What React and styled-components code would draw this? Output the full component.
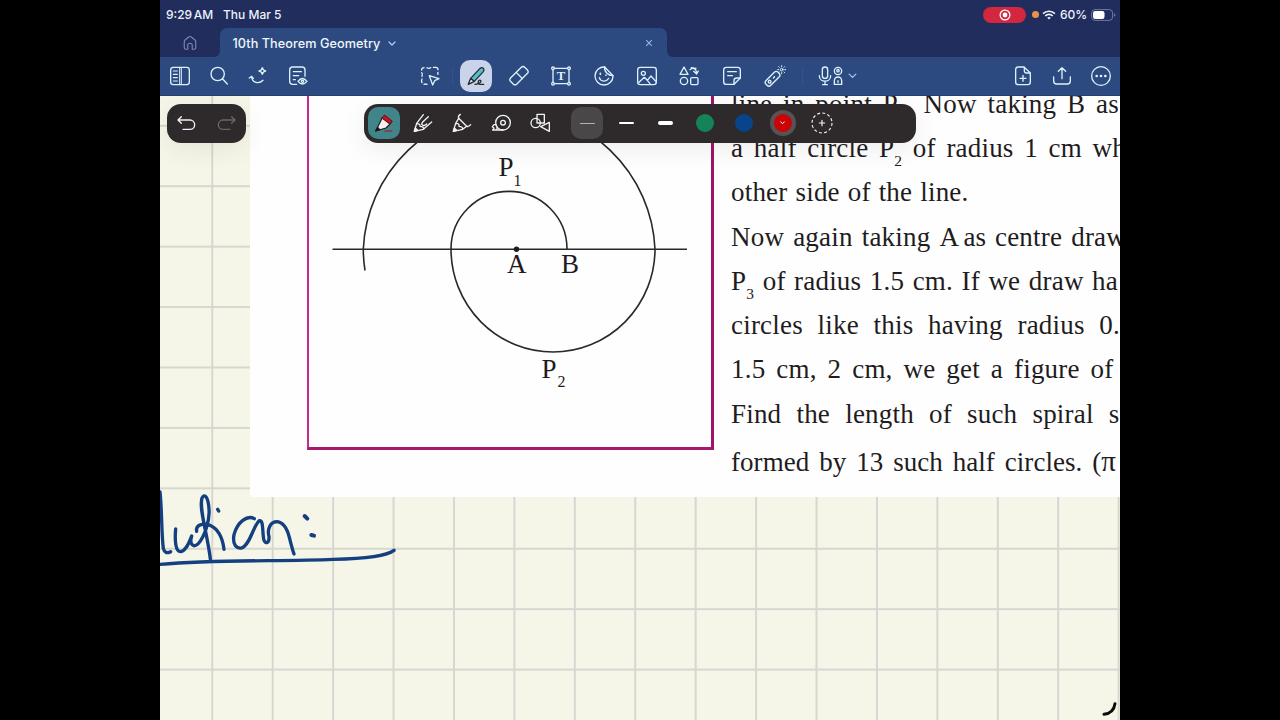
import React from 'react';
import styled, { createGlobalStyle } from 'styled-components';

const GlobalStyle = createGlobalStyle`
    *{
        box-sizing: border-box;
    }
    body{
        margin: 0;
        background: #000000;
    }
`
const Screen = styled.div`
    width: 1280px;
    height: 720px;
    display: flex;
    justify-content: center;
    overflow: hidden;
    background: #000000;
`
const Tablet = styled.div`
    width: 960px;
    height: 720px;
    display: flex;
    flex-direction: column;
    font-family: Inter, "Liberation Sans", sans-serif;
    background: #212d5d;
`
const StatusBar = styled.div`
    height: 28px;
    display: flex;
    align-items: center;
    padding: 1px 4px 0 6px;
    color: #eef2fb;
    font-size: 12px;
    font-weight: 500;
    white-space: nowrap;
`
const Clock = styled.span`
    width: 57px;
    word-spacing: -1.6px;
`
const Today = styled.span`
    flex: 1;
`
const RecordPill = styled.div`
    width: 43px;
    height: 16px;
    display: flex;
    align-items: center;
    justify-content: center;
    border-radius: 8px;
    background: #d3263f;
`
const MicDot = styled.div`
    width: 7px;
    height: 7px;
    margin: 0 3px 0 6px;
    border-radius: 50%;
    background: #e8914a;
`
const Percent = styled.span`
    width: 28px;
    margin: 0 3px 0 4px;
    font-size: 12px;
`
const TabRow = styled.div`
    height: 29px;
    display: flex;
    background: #2c4a80;
`
const HomeTab = styled.div`
    width: 60px;
    display: flex;
    align-items: center;
    justify-content: center;
    border-bottom-right-radius: 6px;
    background: #212d5d;
`
const TabSlot = styled.div`
    width: 446.5px;
    background: linear-gradient(#212d5d 50%, #2c4a80 50%);
`
const Tab = styled.div`
    height: 100%;
    display: flex;
    align-items: center;
    padding: 1px 14px 0 12.5px;
    border-radius: 7px 7px 0 0;
    background: #2c4a80;
`
const TabTitle = styled.span`
    color: #eef6fd;
    font-size: 12.7px;
    font-weight: 500;
    letter-spacing: 0.05px;
    white-space: nowrap;
    margin-right: 8px;
`
const Spacer = styled.div`
    flex: 1;
`
const TabRest = styled.div`
    flex: 1;
    border-bottom-left-radius: 6px;
    background: #212d5d;
`
const Toolbar = styled.div`
    height: 39px;
    flex-shrink: 0;
    display: flex;
    align-items: center;
    background: #2c4a80;
    border-bottom: 1px solid #25406f;
    color: #dcf1fb;
`
const Group = styled.div`
    display: flex;
    align-items: center;
    margin-left: ${p => p.$gap || 0}px;
`
const Cell = styled.div`
    width: ${p => p.$w}px;
    height: 39px;
    display: flex;
    align-items: center;
    justify-content: center;
    flex-shrink: 0;
`
const Divider = styled.div`
    width: 1px;
    height: 18px;
    margin: 0 1.1px;
    background: #35528a;
`
const Tile = styled.div`
    width: 32px;
    height: 32px;
    display: flex;
    align-items: center;
    justify-content: center;
    border-radius: 10px;
    background: ${p => p.$bg};
`
const Canvas = styled.div`
    position: relative;
    flex: 1;
    overflow: hidden;
    background-color: #f5f5e8;
    background-image:
        linear-gradient(90deg, #d7d7d1 1.7px, transparent 1.7px),
        linear-gradient(#d7d7d1 1.7px, transparent 1.7px);
    background-size: 60.43px 60.43px;
    background-position: 51.3px 28.8px;
`
const Paper = styled.div`
    height: 401px;
    display: flex;
    margin-left: 90px;
    overflow: hidden;
    background: #fefefe;
`
const Figure = styled.div`
    width: 407px;
    height: 354px;
    margin-left: 57px;
    flex-shrink: 0;
    border-left: 2px solid #c62a8e;
    border-right: 3px solid #9e1468;
    border-bottom: 3px solid #a9176f;

    svg{
        display: block;
    }
`
const Problem = styled.div`
    margin: -14.4px 0 0 17px;
    flex-shrink: 0;
    font-family: "Liberation Serif", serif;
    font-size: 27px;
    color: #1f1c1d;
`
const Line = styled.div`
    width: ${p => p.$w}px;
    height: ${p => p.$h || 44.3}px;
    line-height: 44px;
    letter-spacing: ${p => p.$spacing ?? 0.2}px;
    white-space: nowrap;
    text-align: justify;
    text-align-last: justify;

    sub{
        font-size: 15.5px;
        line-height: 0;
        vertical-align: -9px;
    }
`
const Tight = styled.span`
    word-spacing: -3px;
    letter-spacing: 0;
`
const Pi = styled.span`
    font-size: 29px;
    line-height: 0;
`
const Floating = styled.div`
    position: absolute;
    top: 7.6px;
    left: ${p => p.$left}px;
    width: ${p => p.$w}px;
    height: 39.2px;
    display: flex;
    align-items: center;
    border-radius: 14px;
    background: #2e2a2b;
    color: #f3f1f1;
    box-shadow: 0 6px 26px rgba(0, 0, 0, 0.07);
`
const Stroke = styled.div`
    width: 15px;
    height: ${p => p.$h}px;
    border-radius: 2px;
    background: ${p => p.$color || "#ffffff"};
`
const Swatch = styled.div`
    width: 18px;
    height: 18px;
    display: flex;
    align-items: center;
    justify-content: center;
    border-radius: 50%;
    background: ${p => p.$color};
    box-shadow: 0 0 0 ${p => p.$active ? 4 : 0}px #575253;
`
const Ink = styled.svg`
    position: absolute;
    left: 0;
    top: 374px;
`
const PageCurl = styled.svg`
    position: absolute;
    left: 940px;
    top: 604px;
`

const Icon = ({size = 24, stroke = 4, color = "currentColor", children}) => (
    <svg width={size} height={size} viewBox="0 0 72 72" fill="none" stroke={color}
        strokeWidth={stroke} strokeLinecap="round" strokeLinejoin="round">
        {children}
    </svg>
)

const Chevron = ({w = 8, color = "#b9cdea", stroke = 1.2}) => (
    <svg width={w} height={w / 2 + 1} viewBox="0 0 8 5" fill="none" stroke={color} strokeWidth={stroke} strokeLinecap="round" strokeLinejoin="round">
        <path d="M1 1l3 3 3-3"/>
    </svg>
)

const leftTools = [
    <Icon key="sidebar">
        <rect x="8" y="10" width="56" height="52" rx="8"/>
        <path d="M35 10v52M40 10v52" strokeWidth="3"/>
        <path d="M16 21h12M16 31h12M16 41h12M16 51h12" strokeWidth="3.5"/>
    </Icon>,
    <Icon key="search">
        <circle cx="32" cy="30" r="20"/>
        <path d="M47 45l14 15"/>
    </Icon>,
    <Icon key="magic">
        <path d="M10 42l7-5 5 6M17 39c2 18 22 22 34 10"/>
        <path d="M49 11q2 9 10 10q-8 1-10 10q-2-9-10-10q8-1 10-10z"/>
    </Icon>,
    <Icon key="review">
        <path d="M32 61H20a9 9 0 0 1-9-9V18a9 9 0 0 1 9-9h28a9 9 0 0 1 9 9v19"/>
        <path d="M22 23h24M22 35h16M22 47h6"/>
        <path d="M36 52q13-17 27 0q-14 16-27 0z"/>
        <circle cx="49.500" cy="52" r="3.500"/>
    </Icon>,
]

const mainTools = [
    <Icon key="eraser">
        <g transform="rotate(-45 36 35)">
            <rect x="6" y="22" width="60" height="26" rx="8"/>
            <path d="M37 22v26"/>
        </g>
    </Icon>,
    <Icon key="text">
        <path d="M17 13h38M17 59h38M12 18v36M60 18v36"/>
        <circle cx="12" cy="13" r="4"/>
        <circle cx="60" cy="13" r="4"/>
        <circle cx="12" cy="59" r="4"/>
        <circle cx="60" cy="59" r="4"/>
        <text x="36" y="49" textAnchor="middle" fontFamily="Liberation Serif, serif" fontWeight="bold" fontSize="38" fill="currentColor" stroke="none">T</text>
    </Icon>,
    <Icon key="sticker">
        <path d="M38 9A27 27 0 1 0 63 35"/>
        <path d="M38 9L63 35C50 36 36 24 38 9z"/>
        <path d="M22 41c4 13 20 14 28 2"/>
        <path d="M25 28v3M42 33v1" strokeWidth="5"/>
    </Icon>,
    <Icon key="image">
        <rect x="8" y="10" width="56" height="52" rx="8"/>
        <circle cx="25" cy="28" r="6"/>
        <path d="M12 55l16-15 9 9 11-13 15 17M37 49l8 10"/>
    </Icon>,
    <Icon key="shapes">
        <path d="M21 9l12 22H9z"/>
        <circle cx="21" cy="51" r="11"/>
        <rect x="41" y="41" width="22" height="21" rx="4"/>
        <path d="M39 17c7-7 19-6 20 12M50 22l9 8 5-9M43 11l14 2"/>
    </Icon>,
    <Icon key="note">
        <path d="M61 42V18a8 8 0 0 0-8-8H19a8 8 0 0 0-8 8v35a8 8 0 0 0 8 8h23z"/>
        <path d="M42 61V50a8 8 0 0 1 8-8h11M23 23h26M23 35h14"/>
    </Icon>,
    <Icon key="laser">
        <g transform="rotate(-45 29 44)">
            <rect x="3" y="34" width="51" height="20" rx="8"/>
            <circle cx="16" cy="44" r="4"/>
            <path d="M32 44h5"/>
        </g>
        <circle cx="56" cy="17" r="4" strokeWidth="3"/>
        <path d="M56 5v3M56 26v3M44 17h3M65 17h3M47 8l2 2M63 24l2 2M65 8l-2 2M49 24l-2 2" strokeWidth="3"/>
    </Icon>,
]

const pens = [
    <Icon key="pencil">
        <path d="M37 11L17 37l-7 24 27-6 25-22"/>
        <path d="M17 38q11 0 10 8q11 0 11 8"/>
        <path d="M52 17L35 33q-6 8 1 10q5 2 11-4"/>
        <path d="M10 61l3-10 7 7z" fill="currentColor"/>
    </Icon>,
    <Icon key="brush">
        <path d="M31 10q-8 5-5 12l24 24q6 2 12-5"/>
        <path d="M26 22L17 37l-7 24 28-6 12-9M17 37q12 0 10 9q11 0 11 9"/>
        <path d="M10 61l3-10 7 7z" fill="currentColor"/>
    </Icon>,
    <Icon key="tape">
        <circle cx="42" cy="35" r="22"/>
        <circle cx="42" cy="35" r="7"/>
        <path d="M42 57H11l4-5-5-5 5-6h6M24 57v-8"/>
    </Icon>,
    <Icon key="geometry">
        <circle cx="23" cy="36" r="14"/>
        <path d="M27 23V10h22v26H27zM64 34v27L38 47z"/>
    </Icon>,
]

const SpiralFigure = () => (
    <svg width="402" height="351" viewBox="309 96 402 351" fill="none" stroke="#2b2829" strokeWidth="1.6">
        <path d="M332.500 249.200H687"/>
        <path d="M567 249A58 57.700 0 0 0 451 249A102 103 0 0 0 655 249A146 146 0 0 0 363.300 249Q363.300 260 365 270.500"/>
        <circle cx="516.500" cy="249.200" r="2.700" fill="#1f1c1d" stroke="none"/>
        <g fill="#1f1c1d" stroke="none" fontFamily="Liberation Serif, serif" fontSize="27">
            <text x="498.500" y="176">P</text>
            <text x="513.500" y="185.500" fontSize="16">1</text>
            <text x="507" y="273">A</text>
            <text x="561" y="273">B</text>
            <text x="541.500" y="377.500">P</text>
            <text x="557.500" y="387" fontSize="16">2</text>
        </g>
    </svg>
)

const Header = () => (
    <>
        <StatusBar>
            <Clock>9:29 AM</Clock>
            <Today>Thu Mar 5</Today>
            <RecordPill>
                <svg width="12" height="12" viewBox="0 0 12 12">
                    <circle cx="6" cy="6" r="4.900" fill="none" stroke="#fff" strokeWidth="1.200"/>
                    <circle cx="6" cy="6" r="2.400" fill="#fff"/>
                </svg>
            </RecordPill>
            <MicDot/>
            <svg width="14" height="10" viewBox="0 0 14 10" fill="none" stroke="#f4f6fc" strokeWidth="1.700">
                <path d="M1.100 3.700a8.300 8.300 0 0 1 11.800 0M3.300 6a5.200 5.200 0 0 1 7.400 0"/>
                <path d="M7 9.600L5.200 7.800a2.600 2.600 0 0 1 3.600 0z" fill="#f4f6fc" stroke="none"/>
            </svg>
            <Percent>60%</Percent>
            <svg width="25" height="12" viewBox="0 0 25 12">
                <rect x="0.600" y="0.600" width="21" height="10.800" rx="3.400" fill="none" stroke="#7079a0"/>
                <rect x="2" y="2" width="11.500" height="8" rx="2.200" fill="#fff"/>
                <path d="M23 4.200v3.600q1.400-.6 1.400-1.800t-1.400-1.800z" fill="#7079a0"/>
            </svg>
        </StatusBar>
        <TabRow>
            <HomeTab>
                <Icon size={18} stroke={4.5} color="#7b86b4">
                    <path d="M13 31q0-4 3-7l15-12q5-4 10 0l15 12q3 3 3 7v24q0 6-6 6h-8V45q0-8-9-8t-9 8v16h-8q-6 0-6-6z"/>
                </Icon>
            </HomeTab>
            <TabSlot>
                <Tab>
                    <TabTitle>10th Theorem Geometry</TabTitle>
                    <Chevron/>
                    <Spacer/>
                    <svg width="8" height="8" viewBox="0 0 8 8" stroke="#9fb4d8" strokeWidth="1.100">
                        <path d="M1.200 1.200l5.600 5.600M6.800 1.200L1.200 6.800"/>
                    </svg>
                </Tab>
            </TabSlot>
            <TabRest/>
        </TabRow>
    </>
)

const Tools = () => (
    <Toolbar>
        <Group>
            {leftTools.map(icon => <Cell key={icon.key} $w={39.3}>{icon}</Cell>)}
        </Group>
        <Group $gap={91.5}>
            <Cell $w={42.7}>
                <Icon>
                    <path d="M11 18q0-7 7-7M27 11q5 4 11 0M46 10h7q7 0 7 7M60 25q-2 3 0 6M11 26q4 5 1 11M12 45q-3 6 0 11M18 61q5-2 9 0"/>
                    <path d="M34 35l29 9-13 6-6 13z"/>
                </Icon>
            </Cell>
            <Divider/>
            <Cell $w={42.7}>
                <Tile $bg="#c9d3e9">
                    <Icon>
                        <path d="M13 61l7-18 11 9z" fill="#dfe8f2" stroke="#23272f"/>
                        <path d="M20 43L48 13q6-4 10 0t0 10L31 52z" fill="#5bbcc3" stroke="#23303c"/>
                        <path d="M33 61q17-2 18-10q-4-6-8 1q-2 9 6 9h10" stroke="#23272f"/>
                    </Icon>
                </Tile>
            </Cell>
            {mainTools.map(icon => <Cell key={icon.key} $w={42.7}>{icon}</Cell>)}
        </Group>
        <Group $gap={5}>
            <Divider/>
            <Group $gap={14}>
                <svg width="26" height="24" viewBox="0 0 78 72" fill="none" stroke="currentColor" strokeWidth="4" strokeLinecap="round">
                    <rect x="13" y="9" width="16" height="34" rx="8"/>
                    <path d="M4 35c0 22 34 22 34 0M21 52v10M14 62h14"/>
                    <circle cx="60" cy="21" r="11"/>
                    <circle cx="60" cy="20" r="3.500"/>
                    <path d="M49 61V50a11 11 0 0 1 22 0v11zM60 50v5"/>
                </svg>
            </Group>
            <Group $gap={3.5}>
                <Chevron w={9} color="#a9c3e6"/>
            </Group>
        </Group>
        <Spacer/>
        <Group>
            <Cell $w={39}>
                <Icon>
                    <path d="M39 9H22a8 8 0 0 0-8 8v37a8 8 0 0 0 8 8h28a8 8 0 0 0 8-8V27z"/>
                    <path d="M40 10v10a7 7 0 0 0 7 7h10M36 34v18M27 43h18"/>
                </Icon>
            </Cell>
            <Cell $w={39}>
                <Icon>
                    <path d="M11 39v12a9 9 0 0 0 9 9h32a9 9 0 0 0 9-9V39M36 44V12M25 22l11-11 11 11"/>
                </Icon>
            </Cell>
            <Cell $w={39}>
                <Icon>
                    <circle cx="36" cy="36" r="28"/>
                    <path d="M23 36h.1M36 36h.1M49 36h.1" strokeWidth="8"/>
                </Icon>
            </Cell>
        </Group>
    </Toolbar>
)

const PenPalette = () => (
    <Floating $left={204.4} $w={551.4}>
        <Cell $w={39.1}>
            <Tile $bg="#41858a">
                <Icon stroke={3.5}>
                    <path d="M31 20L11 60l31-9 13-13z" fill="#f6eef0" stroke="#1d1718"/>
                    <path d="M30 20l8-8 23 19-6 8z" fill="#c4151c" stroke="#5c1216" strokeWidth="3"/>
                    <path d="M11 60l6-11 6 7z" fill="#1d1718" stroke="#1d1718"/>
                    <path d="M38 60h22" stroke="#a3141d"/>
                </Icon>
            </Tile>
        </Cell>
        {pens.map(icon => <Cell key={icon.key} $w={39.1}>{icon}</Cell>)}
        <Group $gap={8}>
            <Cell $w={39.1}>
                <Tile $bg="#4a4749"><Stroke $h={1} $color="#b5b3b4"/></Tile>
            </Cell>
            <Cell $w={39.1}><Stroke $h={2}/></Cell>
            <Cell $w={39.1}><Stroke $h={4}/></Cell>
            <Cell $w={39.1}><Swatch $color="#14835a"/></Cell>
            <Cell $w={39.1}><Swatch $color="#084489"/></Cell>
            <Cell $w={39.1}>
                <Swatch $color="#cb0307" $active><Chevron w={5} color="#ffffff" stroke={1.6}/></Swatch>
            </Cell>
            <Cell $w={39.1}>
                <Icon stroke={3.5}>
                    <circle cx="36" cy="36" r="30" strokeDasharray="9 6.700" strokeLinecap="butt"/>
                    <path d="M36 28v16M28 36h16"/>
                </Icon>
            </Cell>
        </Group>
    </Floating>
)

export default function App() {
    return(
        <Screen>
            <GlobalStyle/>
            <Tablet>
                <Header/>
                <Tools/>
                <Canvas>
                    <Paper>
                        <Figure><SpiralFigure/></Figure>
                        <Problem>
                            <Line $w={388}>line in point P<sub>1</sub>. Now taking B as</Line>
                            <Line $w={395}>a half circle P<sub>2</sub> of radius 1 cm wh</Line>
                            <Line $w={237.5}>other side of the line.</Line>
                            <Line $w={395}>Now again taking <Tight>A as</Tight> centre draw</Line>
                            <Line $w={387}>P<sub>3</sub> of radius 1.5 cm. If we draw ha</Line>
                            <Line $w={389}>circles like this having radius 0.</Line>
                            <Line $w={382.5}>1.5 cm, 2 cm, we get a figure of</Line>
                            <Line $w={388.5} $h={48}>Find the length of such spiral s</Line>
                            <Line $w={385} $spacing={0.05}>formed by 13 such half circles. (<Pi>π</Pi></Line>
                        </Problem>
                    </Paper>
                    <Ink width="260" height="120" viewBox="0 0 780 360" fill="none" stroke="#143f80" strokeWidth="10" strokeLinecap="round" strokeLinejoin="round">
                        <path d="M0 66C6 120 4 190 10 236Q15 254 32 245"/>
                        <path d="M47 177C44 210 46 247 63 245C80 240 88 215 95 198C88 222 98 234 114 222C134 200 150 150 147 118C145 82 134 68 126 84C116 115 142 190 151 267"/>
                        <path d="M110 184C106 164 130 158 150 166C176 178 188 205 192 238"/>
                        <path d="M173 118l3 5"/>
                        <path d="M283 146C262 134 232 156 222 194C217 222 228 236 245 234C270 226 280 166 298 152C312 150 306 190 312 211C318 224 328 218 327 200C321 178 330 157 349 155C372 156 382 178 388 202C393 222 397 238 402 252"/>
                        <path d="M434 138l8 8M454 195l8 2" strokeWidth="12"/>
                        <path d="M0 283C180 268 360 275 520 268C610 266 680 258 702 241"/>
                    </Ink>
                    <PageCurl width="20" height="20" viewBox="0 0 60 60" fill="none" stroke="#0c0c0c" strokeWidth="9" strokeLinecap="round">
                        <path d="M45 11Q41 40 12 43"/>
                    </PageCurl>
                    <Floating $left={7} $w={78.7}>
                        <Cell $w={39.3}>
                            <Icon>
                                <path d="M19 17L9 27l10 10M9 27h36a13 13 0 0 1 0 28H24"/>
                            </Icon>
                        </Cell>
                        <Cell $w={39.3}>
                            <Icon color="#696566">
                                <path d="M53 17l10 10-10 10M63 27H27a13 13 0 0 0 0 28h21"/>
                            </Icon>
                        </Cell>
                    </Floating>
                    <PenPalette/>
                </Canvas>
            </Tablet>
        </Screen>
    )
}
